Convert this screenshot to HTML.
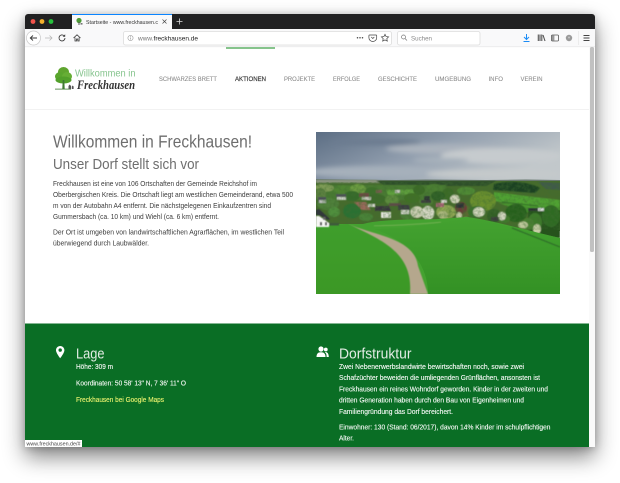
<!DOCTYPE html>
<html lang="de">
<head>
<meta charset="utf-8">
<title>Willkommen in Freckhausen</title>
<style>
html,body{margin:0;padding:0;background:#fff;width:620px;height:483px;overflow:hidden}
#win{position:absolute;left:25px;top:14px;width:570px;height:433px;border-radius:3px 3px 0 0;box-shadow:0 10px 22px rgba(0,0,0,.48),0 1px 8px rgba(0,0,0,.22)}
svg#page{position:absolute;left:0;top:0;filter:blur(.3px)}
text{font-family:"Liberation Sans",sans-serif}
</style>
</head>
<body>
<div id="win"></div>
<svg id="page" width="620" height="483" viewBox="0 0 620 483" xmlns="http://www.w3.org/2000/svg">
<defs>
<clipPath id="w"><path d="M25 447V17a3 3 0 0 1 3-3H592a3 3 0 0 1 3 3V447z"/></clipPath>
<clipPath id="ph"><rect x="0" y="0" width="244" height="162"/></clipPath>
<linearGradient id="sky" x1="0" y1="0" x2="1" y2=".45"><stop offset="0" stop-color="#5c6e84"/><stop offset=".5" stop-color="#919eae"/><stop offset="1" stop-color="#c2c8cb"/></linearGradient>
<linearGradient id="m1" x1="0" y1="0" x2="0" y2="1"><stop offset="0" stop-color="#3f9e2c"/><stop offset="1" stop-color="#3c9825"/></linearGradient>
<linearGradient id="m2" x1="0" y1="0" x2="0" y2="1"><stop offset="0" stop-color="#44a230"/><stop offset="1" stop-color="#339124"/></linearGradient>
<filter id="b1" x="-10%" y="-10%" width="120%" height="120%"><feGaussianBlur stdDeviation=".55"/></filter>
<filter id="b2" x="-20%" y="-50%" width="140%" height="200%"><feGaussianBlur stdDeviation="2.5"/></filter>
<filter id="tex" x="0" y="0" width="100%" height="100%"><feTurbulence type="fractalNoise" baseFrequency=".28" numOctaves="2" seed="7"/><feColorMatrix values="0 0 0 0 .05  0 0 0 0 .15  0 0 0 0 .03  1.1 0 0 0 -.4"/></filter>
</defs>

<g clip-path="url(#w)">
<rect x="25" y="14" width="570" height="433" fill="#fff"/>
<!-- title bar -->
<rect x="25" y="14" width="570" height="15" fill="#212122"/>
<circle cx="33" cy="21.500" r="2.400" fill="#f2544c"/><circle cx="42" cy="21.500" r="2.400" fill="#f4b02c"/><circle cx="51" cy="21.500" r="2.400" fill="#27c13d"/>
<rect x="72" y="14" width="100" height="15" fill="#f9f9fa"/>
<rect x="72" y="14" width="100" height="1" fill="#0a84ff"/>
<circle cx="79" cy="20.500" r="2.600" fill="#4c9a35"/><rect x="78.500" y="22" width="1" height="3" fill="#555"/><rect x="80.500" y="23" width="2" height="1.600" fill="#777"/>
<text x="86" y="24" font-size="5.400" fill="#333" textLength="72" lengthAdjust="spacingAndGlyphs">Startseite - www.freckhausen.c</text>
<path d="M162.500 19.500l4 4M166.500 19.500l-4 4" stroke="#444" stroke-width=".7" fill="none"/>
<path d="M179.500 18.500v6M176.500 21.500h6" stroke="#ddd" stroke-width=".8" fill="none"/>
<!-- toolbar -->
<rect x="25" y="29" width="570" height="18" fill="#f9f9fa"/>
<circle cx="33.500" cy="38" r="7" fill="#fff" stroke="#c8c8c8" stroke-width=".7"/>
<path d="M37 38h-6.500M33 35.500L30.300 38L33 40.500" stroke="#3a3a3a" stroke-width=".9" fill="none"/>
<path d="M52 38h-7M49.500 35.500L52 38L49.500 40.500" stroke="#b8b8b8" stroke-width=".8" fill="none"/>
<path d="M65 38a3 3 0 1 1-1-2.300" stroke="#3a3a3a" stroke-width=".9" fill="none"/><path d="M65.200 34.300v2.500h-2.500z" fill="#3a3a3a"/>
<path d="M73.500 38L77 34.800L80.500 38M75 37.500V41h1.500v-2h1.300v2h1.300v-3.500" stroke="#3a3a3a" stroke-width=".8" fill="none"/>
<rect x="123.500" y="31.500" width="268" height="13.500" rx="2" fill="#fff" stroke="#dcdcdc" stroke-width=".8"/>
<circle cx="130.500" cy="38" r="2.600" fill="none" stroke="#999" stroke-width=".6"/><path d="M130.500 37.500v2M130.500 36v.7" stroke="#888" stroke-width=".6"/>
<text x="138" y="40.300" font-size="6.300" fill="#777" textLength="60" lengthAdjust="spacingAndGlyphs">www.<tspan fill="#222">freckhausen.de</tspan></text>
<circle cx="357.500" cy="37.800" r=".75" fill="#444"/><circle cx="360" cy="37.800" r=".75" fill="#444"/><circle cx="362.500" cy="37.800" r=".75" fill="#444"/>
<path d="M369.500 35h6.600a.6 .6 0 0 1 .6 .6v2a3.900 3.900 0 0 1-7.800 0v-2a.6 .6 0 0 1 .6-.6zM371.300 37l1.500 1.500l1.500-1.500" stroke="#444" stroke-width=".7" fill="none"/>
<path d="M385 34.300l1.100 2.300l2.500.3l-1.800 1.700l.5 2.500l-2.300-1.200l-2.300 1.200l.5-2.500l-1.800-1.700l2.500-.3z" stroke="#444" stroke-width=".7" fill="none"/>
<rect x="397.500" y="31.500" width="82.500" height="13.500" rx="2" fill="#fff" stroke="#dcdcdc" stroke-width=".8"/>
<circle cx="403.500" cy="37" r="2" fill="none" stroke="#777" stroke-width=".7"/><path d="M405 38.500l2 2" stroke="#777" stroke-width=".7"/>
<text x="411" y="40.300" font-size="6.300" fill="#888" textLength="21" lengthAdjust="spacingAndGlyphs">Suchen</text>
<path d="M526.500 34v5M524 37l2.500 2.500L529 37M523.500 41.500h6" stroke="#1c8cf5" stroke-width="1" fill="none"/>
<path d="M538.300 34.500v6.500M540 34.500v6.500M541.800 34.500v6.500M543 35l2 6" stroke="#555" stroke-width="1.100" fill="none"/>
<rect x="551.500" y="35" width="7" height="6" rx="1" fill="none" stroke="#555" stroke-width=".8"/><rect x="552" y="35.500" width="2.400" height="5" fill="#999"/>
<circle cx="569" cy="38" r="3.200" fill="#9a9a9a"/><circle cx="569" cy="37.500" r="1" fill="#c4c4c4"/>
<rect x="578" y="31" width=".7" height="14" fill="#e6e6e6"/>
<path d="M583.500 35.500h6M583.500 38h6M583.500 40.500h6" stroke="#444" stroke-width=".9" fill="none"/>
<rect x="25" y="46.500" width="570" height=".6" fill="#e4e4e4"/>

<!-- scrollbar -->
<rect x="589" y="47" width="6" height="400" fill="#fafafa"/>
<rect x="590" y="47" width="4" height="205" rx="1.500" fill="#c1c1c1"/>

<!-- header -->
<rect x="226" y="47" width="49" height="2" fill="#86c48c"/>
<rect x="25" y="109" width="564" height=".8" fill="#efefef"/>
<!-- logo -->
<g>
<ellipse cx="63.500" cy="72" rx="5.500" ry="5" fill="#5fa52f"/>
<ellipse cx="60" cy="76.500" rx="5" ry="4.500" fill="#5aa62e"/>
<ellipse cx="67" cy="76.500" rx="5" ry="4.500" fill="#66ae35"/>
<ellipse cx="63.500" cy="80" rx="8" ry="3.500" fill="#52a02b"/>
<path d="M62.700 80h1.600l.4 9h-2.400z" fill="#3f7a33"/>
<rect x="55" y="88.700" width="16" height=".8" fill="#3f7a33"/>
<path d="M68.500 89v-3l1.200-1.500l1.300 1.500v3zM71.800 89v-2.500l.9-1l.9 1V89z" fill="#555"/>
<text x="75" y="76.500" font-size="10" fill="#86c48e" textLength="60.500" lengthAdjust="spacingAndGlyphs">Willkommen in</text>
<text x="77" y="89" font-size="13" font-weight="700" font-style="italic" fill="#333" textLength="58" lengthAdjust="spacingAndGlyphs" style="font-family:'Liberation Serif',serif">Freckhausen</text>
</g>
<!-- nav -->
<g font-size="6.800" fill="#8c8c8c" stroke="#8c8c8c" stroke-width=".08">
<text x="159" y="81" textLength="58" lengthAdjust="spacingAndGlyphs">SCHWARZES BRETT</text>
<text x="235" y="81" textLength="31" lengthAdjust="spacingAndGlyphs" fill="#3a3a3a" stroke="#3a3a3a" stroke-width=".18">AKTIONEN</text>
<text x="284" y="81" textLength="31" lengthAdjust="spacingAndGlyphs">PROJEKTE</text>
<text x="333" y="81" textLength="27" lengthAdjust="spacingAndGlyphs">ERFOLGE</text>
<text x="378" y="81" textLength="39" lengthAdjust="spacingAndGlyphs">GESCHICHTE</text>
<text x="435" y="81" textLength="36" lengthAdjust="spacingAndGlyphs">UMGEBUNG</text>
<text x="488.500" y="81" textLength="14.500" lengthAdjust="spacingAndGlyphs">INFO</text>
<text x="520.500" y="81" textLength="22" lengthAdjust="spacingAndGlyphs">VEREIN</text>
</g>

<!-- intro -->
<text x="53" y="147.500" font-size="17.500" fill="#6e6e6e" textLength="199" lengthAdjust="spacingAndGlyphs">Willkommen in Freckhausen!</text>
<text x="53" y="169" font-size="14.500" fill="#6e6e6e" textLength="146" lengthAdjust="spacingAndGlyphs">Unser Dorf stellt sich vor</text>
<g font-size="7.400" fill="#3c3c3c">
<text x="53" y="185.800" textLength="204" lengthAdjust="spacingAndGlyphs">Freckhausen ist eine von 106 Ortschaften der Gemeinde Reichshof im</text>
<text x="53" y="196.800" textLength="240" lengthAdjust="spacingAndGlyphs">Oberbergischen Kreis. Die Ortschaft liegt am westlichen Gemeinderand, etwa 500</text>
<text x="53" y="207.900" textLength="218" lengthAdjust="spacingAndGlyphs">m von der Autobahn A4 entfernt. Die nächstgelegenen Einkaufzentren sind</text>
<text x="53" y="219" textLength="166" lengthAdjust="spacingAndGlyphs">Gummersbach (ca. 10 km) und Wiehl (ca. 6 km) entfernt.</text>
<text x="53" y="234.500" textLength="231" lengthAdjust="spacingAndGlyphs">Der Ort ist umgeben von landwirtschaftlichen Agrarflächen, im westlichen Teil</text>
<text x="53" y="245.500" textLength="96" lengthAdjust="spacingAndGlyphs">überwiegend durch Laubwälder.</text>
</g>

<!-- photo -->
<g transform="translate(316 132)" clip-path="url(#ph)">
<rect width="244" height="50" fill="url(#sky)"/>
<g filter="url(#b2)">
<ellipse cx="130" cy="17" rx="60" ry="5" fill="#aab2bc"/>
<ellipse cx="185" cy="24" rx="60" ry="8" fill="#c6cbce"/>
<ellipse cx="125" cy="28" rx="28" ry="2.500" fill="#a8b2bc"/>
<ellipse cx="60" cy="10" rx="45" ry="3" fill="#6c7c90"/>
<ellipse cx="60" cy="40" rx="70" ry="6" fill="#a6b0bb"/>
<ellipse cx="180" cy="42" rx="70" ry="5" fill="#c4c9cb"/>
</g>
<!-- far hills -->
<path d="M0 47l30 .5l50 .5l30-.5l60 .5l40-.5l34 .5V56H0z" fill="#69796f"/>
<rect y="49" width="244" height="50" fill="#466b2c"/>
<g filter="url(#b1)">
<path d="M0 48H60L70 51H0z" fill="#8a947f"/>
<path d="M60 49H180L170 54H70z" fill="#2f4f2a"/>
<path d="M178 52c14-4 36-2 46 4l-5 5l-42-3z" fill="#1c4220"/>
<path d="M222 50l22 1v7l-14-1z" fill="#3f5a48"/>
<path d="M0 53H130V68H0z" fill="#4a7a30"/>
<path d="M70 58l27-.5l3 5l-28 .5z" fill="#5f9f3e"/>
<path d="M178 60l66 8v9l-30-1l-36-7z" fill="#4fa130"/>
<path d="M182 71l40 4l22 1v5l-30 0z" fill="#4a9a2e"/>
<path d="M186 70l36 4" stroke="#2d6a25" stroke-width="1"/>
<ellipse cx="8" cy="56" rx="10" ry="4" fill="#7d9a55"/>
<ellipse cx="28" cy="58" rx="10" ry="5" fill="#4f8432"/>
<ellipse cx="42" cy="57" rx="8" ry="5" fill="#6a9a3f"/>
<ellipse cx="56" cy="60" rx="7" ry="5" fill="#3e7029"/>
<ellipse cx="103" cy="58" rx="6" ry="5" fill="#3a6a28"/>
<ellipse cx="118" cy="56" rx="8" ry="4" fill="#4c7f30"/>
<ellipse cx="132" cy="62" rx="6" ry="6" fill="#3a6a28"/>
<ellipse cx="150" cy="59" rx="9" ry="4" fill="#4f8a35"/>
<!-- mid trees -->
<ellipse cx="12" cy="72" rx="11" ry="6" fill="#50803a"/>
<ellipse cx="4" cy="62" rx="6" ry="6" fill="#5b8040"/>
<ellipse cx="36" cy="64" rx="8" ry="5" fill="#356a2a"/>
<ellipse cx="60" cy="67" rx="10" ry="5" fill="#3d6b2c"/>
<ellipse cx="76" cy="68" rx="7" ry="5" fill="#5c8a3c"/>
<ellipse cx="96" cy="66" rx="8" ry="5" fill="#3f7028"/>
<ellipse cx="110" cy="70" rx="7" ry="4" fill="#4d7a35"/>
<ellipse cx="122" cy="64" rx="7" ry="5" fill="#2f5f26"/>
<ellipse cx="92" cy="82" rx="8" ry="6" fill="#4b7e38"/>
<ellipse cx="130" cy="80" rx="10" ry="7" fill="#8ea552"/>
<ellipse cx="148" cy="79" rx="7" ry="6" fill="#5a6a30"/>
<ellipse cx="145" cy="76" rx="6" ry="6" fill="#6a3c38"/>
<ellipse cx="167" cy="69" rx="13" ry="10" fill="#6a8f2e"/>
<ellipse cx="161" cy="80" rx="9" ry="6" fill="#37702c"/>
<ellipse cx="178" cy="84" rx="7" ry="7" fill="#305f27"/>
<ellipse cx="200" cy="81" rx="11" ry="9" fill="#28601f"/>
<ellipse cx="188" cy="87" rx="6" ry="4" fill="#3f7a2c"/>
<rect x="212" y="78" width="32" height="28" fill="#25531e"/>
<ellipse cx="219" cy="90" rx="7" ry="9" fill="#3c7a2c"/>
<ellipse cx="235" cy="84" rx="9" ry="11" fill="#2e6a24"/>
<ellipse cx="212" cy="92" rx="6" ry="6" fill="#4a8030"/>
<ellipse cx="36" cy="79" rx="9" ry="7.500" fill="#2c7030"/>
<ellipse cx="50" cy="85" rx="7" ry="4" fill="#4a8238"/>
<ellipse cx="18" cy="80" rx="6" ry="5" fill="#4f8e3c"/>
<!-- blossoms -->
<ellipse cx="101" cy="80" rx="6.500" ry="6" fill="#c8cbb0"/>
<ellipse cx="112" cy="81" rx="6.500" ry="7" fill="#d3d5c2"/>
<ellipse cx="127" cy="83" rx="5" ry="4" fill="#a9b57c"/>
<ellipse cx="139" cy="67" rx="5" ry="4.500" fill="#cdd0b6"/>
<ellipse cx="163" cy="80" rx="6" ry="5" fill="#d4d7c0"/>
<ellipse cx="143" cy="84" rx="3" ry="4" fill="#c3c9a5"/>
<ellipse cx="186" cy="84" rx="4" ry="4.500" fill="#d0d4bf"/>
<ellipse cx="207" cy="93" rx="5" ry="3.500" fill="#bcc69a"/>
<ellipse cx="221" cy="97" rx="4" ry="5" fill="#c6cda5"/>
<ellipse cx="150" cy="87" rx="3" ry="2" fill="#9fb06a"/>
<!-- houses -->
<path d="M2 65h8v5H2z" fill="#4b5058"/><path d="M3 68h7v3H3z" fill="#b9bcb9"/>
<path d="M20 62h10v3H20z" fill="#50505a"/><path d="M21 65h9v3h-9z" fill="#d0d3cc"/>
<path d="M43 61h10v4H43z" fill="#6a4a42"/><path d="M46 65h9v3h-9z" fill="#c6c6bb"/>
<path d="M38 70h12l5 8H46z" fill="#98685a"/><path d="M52 72h7v3h-7z" fill="#d5d6ce"/>
<path d="M59 74h14l2 5H59z" fill="#37363c"/><path d="M65 80h10v6H65z" fill="#e4e5de"/>
<path d="M73 71h12v3H73z" fill="#5d4b46"/>
<path d="M82 73h11l1 5H82z" fill="#3a3a42"/><path d="M85 78h8v4h-8z" fill="#d9dad2"/>
<path d="M60 58h6v3h-6z" fill="#7a5a50"/><path d="M79 58h5v3h-5z" fill="#c4c5bd"/>
<path d="M105 68h10v3h-10z" fill="#3b3a3c"/><path d="M108 64h6v4h-6z" fill="#2a3030"/>
<path d="M120 71h8v4h-8z" fill="#b5607e"/><path d="M125 68h6v3h-6z" fill="#ced0c6"/>
<path d="M140 71h8v5h-8z" fill="#2e3036"/>
<path d="M212 76h12v3h-12z" fill="#2c2e30"/><path d="M222 76h6v3h-6z" fill="#d6d8d8"/>
<path d="M175 85h8v4h-8z" fill="#3a3c3c"/>
</g>
<rect y="50" width="244" height="48" filter="url(#tex)"/>
<!-- meadow back -->
<path d="M47 92C70 86 110 88 122 87L151 85C175 88 205 97 244 106V162H0V92z" fill="#44a230"/>
<path d="M58 97C95 96 125 92 151 85L244 106V162H112C112 130 90 108 58 97z" fill="url(#m2)"/>
<path d="M58 94C90 93 110 92 125 90" stroke="#7fb45c" stroke-width=".8" fill="none" filter="url(#b1)"/>
<path d="M196 96L244 115" stroke="#2f6a2a" stroke-width="1.200" filter="url(#b1)"/>
<path d="M0 94L32 92C60 106 92 108 95 136L94 162H0z" fill="url(#m1)"/>
<path d="M32 92C60 104 98 106 102 134L112 162H94C97 124 72 110 32 92z" fill="#b5a78d" filter="url(#b1)"/>
<!-- white house -->
<g filter="url(#b1)">
<path d="M0 84h3l10 7v4H0z" fill="#f6f6f4"/>
<path d="M0 78l3-1l11 10l-2 1l-9-5H0z" fill="#33373a"/>
<rect x="4" y="90" width="2" height="3.500" fill="#444"/><rect x="9" y="90" width="2" height="3.500" fill="#555"/><rect x="7" y="85" width="2.500" height="3" fill="#666"/>
<rect x="13" y="91" width="10" height="2.500" fill="#3d5a3a"/>
</g>
</g>

<!-- green section -->
<rect x="25" y="323.500" width="564" height="123.500" fill="#0a6e25"/>
<path d="M60.200 346c-2.400 0-4.200 1.900-4.200 4.200c0 2.800 4.200 8 4.200 8s4.200-5.200 4.200-8c0-2.300-1.800-4.200-4.200-4.200zm0 5.800a1.700 1.700 0 1 1 0-3.400a1.700 1.700 0 0 1 0 3.400z" fill="#fff"/>
<text x="76" y="358.500" font-size="14.500" fill="#e2ece4" textLength="28.500" lengthAdjust="spacingAndGlyphs">Lage</text>
<g font-size="7.300" fill="#f6f9f6" stroke="#f6f9f6" stroke-width=".12">
<text x="76" y="369" textLength="37" lengthAdjust="spacingAndGlyphs">Höhe: 309 m</text>
<text x="76" y="385.500" textLength="110" lengthAdjust="spacingAndGlyphs">Koordinaten: 50 58' 13" N, 7 36' 11" O</text>
<text x="76" y="402" textLength="88" lengthAdjust="spacingAndGlyphs" fill="#e9f26e" stroke="#e9f26e">Freckhausen bei Google Maps</text>
</g>
<g fill="#fff">
<circle cx="321" cy="349" r="2.600"/><path d="M316.500 357c0-3.200 1.300-4.800 4.500-4.800s4.500 1.600 4.500 4.800z"/>
<circle cx="325.800" cy="349.500" r="1.900"/><path d="M325.500 352c1.900 0 3.300 1.800 3.300 5h-2.200c0-2-.2-3.600-1.600-4.500z"/>
</g>
<text x="339" y="358.500" font-size="14.500" fill="#e2ece4" textLength="72.500" lengthAdjust="spacingAndGlyphs">Dorfstruktur</text>
<g font-size="7.300" fill="#f6f9f6" stroke="#f6f9f6" stroke-width=".12">
<text x="339" y="369" textLength="185" lengthAdjust="spacingAndGlyphs">Zwei Nebenerwerbslandwirte bewirtschaften noch, sowie zwei</text>
<text x="339" y="380.200" textLength="201" lengthAdjust="spacingAndGlyphs">Schafzüchter beweiden die umliegenden Grünflächen, ansonsten ist</text>
<text x="339" y="391.400" textLength="209" lengthAdjust="spacingAndGlyphs">Freckhausen ein reines Wohndorf geworden. Kinder in der zweiten und</text>
<text x="339" y="402.600" textLength="185" lengthAdjust="spacingAndGlyphs">dritten Generation haben durch den Bau von Eigenheimen und</text>
<text x="339" y="413.800" textLength="114" lengthAdjust="spacingAndGlyphs">Familiengründung das Dorf bereichert.</text>
<text x="339" y="429.500" textLength="211.500" lengthAdjust="spacingAndGlyphs">Einwohner: 130 (Stand: 06/2017), davon 14% Kinder im schulpflichtigen</text>
<text x="339" y="440.700" textLength="15" lengthAdjust="spacingAndGlyphs">Alter.</text>
</g>
<!-- status -->
<rect x="25" y="440" width="57" height="7" fill="#fff"/>
<text x="26.500" y="445.500" font-size="5.300" fill="#444" textLength="54" lengthAdjust="spacingAndGlyphs">www.freckhausen.de/#</text>
</g>
</svg>
</body>
</html>
